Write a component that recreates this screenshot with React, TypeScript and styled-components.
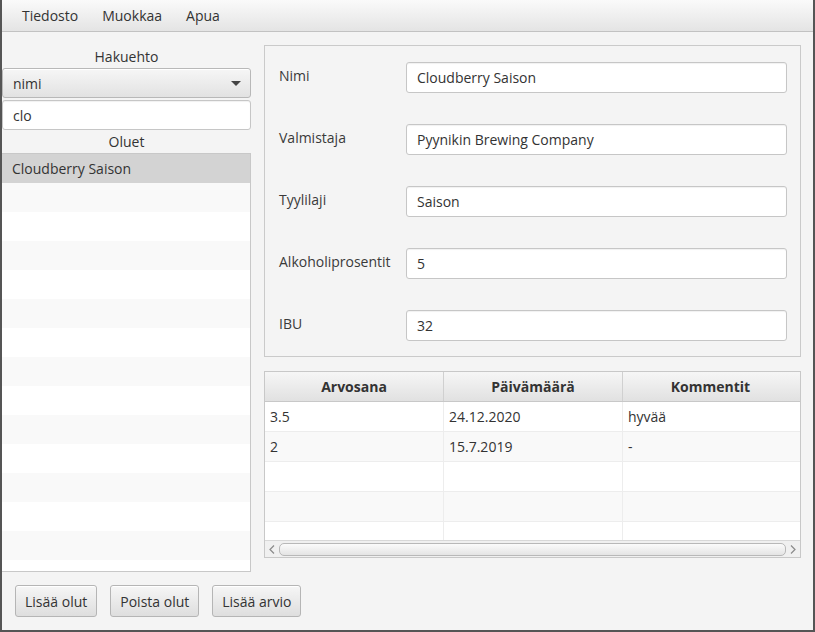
import React from "react";
import styled, { createGlobalStyle } from "styled-components";

const Global = createGlobalStyle`
  html, body { margin: 0; padding: 0; background: #f4f4f4; }
  body { font-family: "Open Sans", "Liberation Sans", sans-serif; font-size: 14px; color: #333; }
  * { box-sizing: border-box; }
`;

const Window = styled.div`
  width: 815px;
  height: 632px;
  background: #f4f4f4;
  border-left: 2px solid #555;
  border-right: 2px solid #555;
  border-bottom: 2px solid #555;
  display: flex;
  flex-direction: column;
  overflow: hidden;
`;

const MenuBar = styled.div`
  height: 32px;
  flex: none;
  display: flex;
  align-items: center;
  padding-left: 8px;
  background: linear-gradient(#fafafa, #e4e4e4);
  border-bottom: 1px solid #c2c2c2;
`;

const MenuItem = styled.div`
  padding: 0 12px;
  line-height: 31px;
  color: #333;
`;

const Main = styled.div`
  flex: 1;
  display: grid;
  grid-template-columns: 249px 1fr;
  column-gap: 13px;
  padding-right: 12px;
  min-height: 0;
`;

const LeftColumn = styled.div`
  display: flex;
  flex-direction: column;
  padding-top: 12px;
  min-height: 0;
`;

const CenterLabel = styled.div<{ $h: number }>`
  height: ${(p) => p.$h}px;
  display: flex;
  align-items: center;
  justify-content: center;
  color: #333;
`;

const Combo = styled.div`
  height: 30px;
  display: flex;
  align-items: center;
  justify-content: space-between;
  padding: 0 9px 0 10px;
  border: 1px solid #b8b8b8;
  border-radius: 3px;
  background: linear-gradient(#f6f6f6, #e2e2e2);
  box-shadow: inset 0 1px 0 #fff;
`;

const Arrow = styled.div`
  width: 0;
  height: 0;
  border-left: 5px solid transparent;
  border-right: 5px solid transparent;
  border-top: 5px solid #444;
  margin-top: 1px;
`;

const Field = styled.div<{ $h?: number }>`
  height: ${(p) => p.$h ?? 30}px;
  display: flex;
  align-items: center;
  padding-left: 10px;
  background: #fff;
  border: 1px solid #c6c6c6;
  border-radius: 3px;
  box-shadow: inset 0 1px 1px rgba(0, 0, 0, 0.06);
  color: #333;
`;

const SearchField = styled(Field)`
  margin-top: 2px;
`;

const List = styled.div`
  flex: 1;
  min-height: 0;
  overflow: hidden;
  background: #fff;
  border: 1px solid #c8c8c8;
  border-left: none;
`;

const ListRow = styled.div<{ $selected?: boolean; $odd?: boolean }>`
  height: 29px;
  display: flex;
  align-items: center;
  padding-left: 10px;
  background: ${(p) => (p.$selected ? "#d3d3d3" : p.$odd ? "#f9f9f9" : "#fff")};
  color: #333;
`;

const RightColumn = styled.div`
  display: flex;
  flex-direction: column;
  padding-top: 13px;
  padding-bottom: 14px;
  gap: 14px;
  min-height: 0;
`;

const FormPanel = styled.div`
  height: 312px;
  flex: none;
  border: 1px solid #cacaca;
  background: #f4f4f4;
  padding: 16px 13px 15px 14px;
  display: grid;
  grid-template-columns: 127px 1fr;
  grid-auto-rows: 31px;
  row-gap: 31px;
`;

const FormLabel = styled.div`
  display: flex;
  align-items: center;
  height: 31px;
  margin-top: -2px;
  color: #3a3a3a;
`;

const Table = styled.div`
  flex: 1;
  display: flex;
  flex-direction: column;
  border: 1px solid #c8c8c8;
  background: #fff;
  min-height: 0;
`;

const Cols = styled.div`
  display: grid;
  grid-template-columns: 179px 179px 1fr;
`;

const HeaderRow = styled(Cols)`
  height: 30px;
  flex: none;
  background: linear-gradient(#f6f6f6, #e1e1e1);
  border-bottom: 1px solid #c8c8c8;
`;

const HeaderCell = styled.div`
  display: flex;
  align-items: center;
  justify-content: center;
  font-weight: bold;
  color: #333;
  border-right: 1px solid #d0d0d0;
  &:last-child { border-right: none; margin-right: 2px; }
`;

const TableBody = styled.div`
  flex: 1;
  min-height: 0;
  overflow: hidden;
`;

const TableRow = styled(Cols)<{ $odd?: boolean }>`
  height: 30px;
  background: ${(p) => (p.$odd ? "#f9f9f9" : "#fff")};
  border-bottom: 1px solid #ededed;
`;

const Cell = styled.div`
  display: flex;
  align-items: center;
  padding-left: 5px;
  border-right: 1px solid #ededed;
  color: #333;
  &:last-child { border-right: none; }
`;

const HScroll = styled.div`
  height: 17px;
  flex: none;
  display: flex;
  align-items: center;
  gap: 3px;
  padding: 0 3px;
  background: #f0f0f0;
  border-top: 1px solid #d8d8d8;
`;

const ScrollArrow = styled.div`
  width: 8px;
  display: flex;
  justify-content: center;
  color: #888;
`;

const Thumb = styled.div`
  flex: 1;
  height: 13px;
  border: 1px solid #b8b8b8;
  border-radius: 5px;
  background: linear-gradient(#fbfbfb, #e4e4e4);
`;

const BottomBar = styled.div`
  height: 58px;
  flex: none;
  display: flex;
  gap: 13px;
  padding: 13px 0 0 13px;
`;

const Button = styled.button`
  height: 32px;
  padding: 0 9px;
  font-family: "Open Sans", "Liberation Sans", sans-serif;
  font-size: 14px;
  color: #333;
  border: 1px solid #b5b5b5;
  border-radius: 3px;
  background: linear-gradient(#f6f6f6, #dedede);
  box-shadow: inset 0 1px 0 #fff;
`;

const formRows = [
  ["Nimi", "Cloudberry Saison"],
  ["Valmistaja", "Pyynikin Brewing Company"],
  ["Tyylilaji", "Saison"],
  ["Alkoholiprosentit", "5"],
  ["IBU", "32"],
];

const reviews = [
  ["3.5", "24.12.2020", "hyvää"],
  ["2", "15.7.2019", "-"],
  ["", "", ""],
  ["", "", ""],
  ["", "", ""],
];

export default function App() {
  return (
    <>
      <Global />
      <Window>
        <MenuBar>
          <MenuItem>Tiedosto</MenuItem>
          <MenuItem>Muokkaa</MenuItem>
          <MenuItem>Apua</MenuItem>
        </MenuBar>
        <Main>
          <LeftColumn>
            <CenterLabel $h={24}>Hakuehto</CenterLabel>
            <Combo>
              <span>nimi</span>
              <Arrow />
            </Combo>
            <SearchField>clo</SearchField>
            <CenterLabel $h={23}>Oluet</CenterLabel>
            <List>
              {Array.from({ length: 15 }).map((_, i) => (
                <ListRow key={i} $selected={i === 0} $odd={i % 2 === 1}>
                  {i === 0 ? "Cloudberry Saison" : ""}
                </ListRow>
              ))}
            </List>
          </LeftColumn>
          <RightColumn>
            <FormPanel>
              {formRows.map(([label, value]) => (
                <React.Fragment key={label}>
                  <FormLabel>{label}</FormLabel>
                  <Field $h={31}>{value}</Field>
                </React.Fragment>
              ))}
            </FormPanel>
            <Table>
              <HeaderRow>
                <HeaderCell>Arvosana</HeaderCell>
                <HeaderCell>Päivämäärä</HeaderCell>
                <HeaderCell>Kommentit</HeaderCell>
              </HeaderRow>
              <TableBody>
                {reviews.map((r, i) => (
                  <TableRow key={i} $odd={i % 2 === 1}>
                    <Cell>{r[0]}</Cell>
                    <Cell>{r[1]}</Cell>
                    <Cell>{r[2]}</Cell>
                  </TableRow>
                ))}
              </TableBody>
              <HScroll>
                <ScrollArrow>
                  <svg width="6" height="9" viewBox="0 0 6 9">
                    <path d="M5 0.5 L1 4.5 L5 8.5" fill="none" stroke="#8a8a8a" strokeWidth="1.2" />
                  </svg>
                </ScrollArrow>
                <Thumb />
                <ScrollArrow>
                  <svg width="6" height="9" viewBox="0 0 6 9">
                    <path d="M1 0.5 L5 4.5 L1 8.5" fill="none" stroke="#8a8a8a" strokeWidth="1.2" />
                  </svg>
                </ScrollArrow>
              </HScroll>
            </Table>
          </RightColumn>
        </Main>
        <BottomBar>
          <Button>Lisää olut</Button>
          <Button>Poista olut</Button>
          <Button>Lisää arvio</Button>
        </BottomBar>
      </Window>
    </>
  );
}
